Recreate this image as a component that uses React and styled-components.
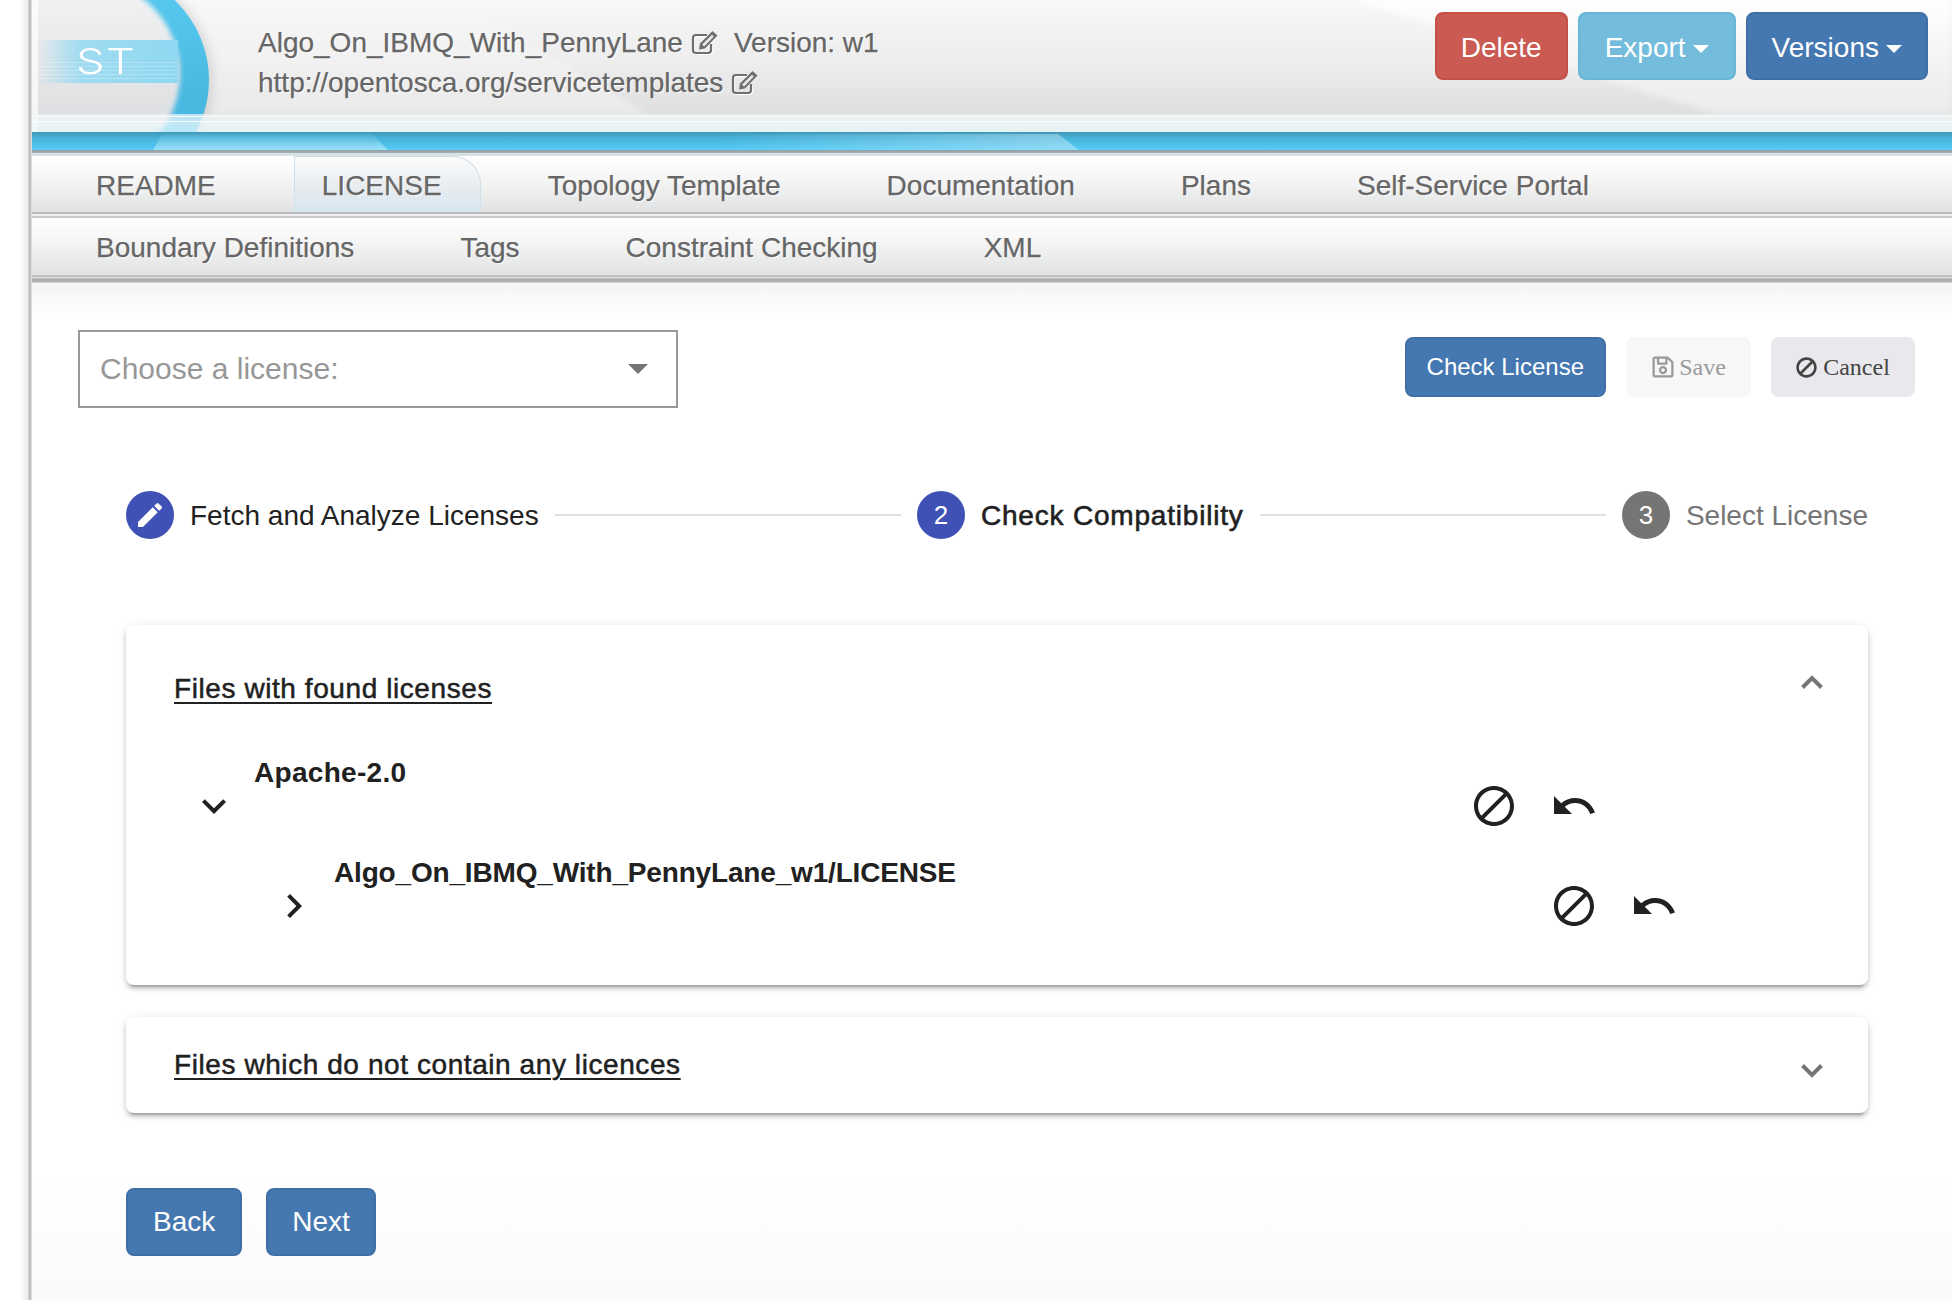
import styled, { createGlobalStyle } from 'styled-components'
import { FaRegSave, FaBan } from 'react-icons/fa'

const GlobalStyle = createGlobalStyle`
  html, body {
    margin: 0;
    padding: 0;
    height: 100%;
    background: #fff;
    font-family: "Liberation Sans", Arial, sans-serif;
    font-size: 28px;
    color: #212121;
    overflow: hidden;
  }
`

const Page = styled.div`
  box-sizing: border-box;
  width: 1952px;
  height: 1300px;
  padding-left: 32px;
  overflow: hidden;
  background: linear-gradient(90deg, #fff 20px, #ececec 27px, #ececec 28px, #bdbdbd 29px, #bdbdbd 31px, transparent 32px);
`

const Main = styled.div`
  height: 1300px;
  background: linear-gradient(180deg, #fff 1180px, #fafafa 1300px);
`

const Header = styled.header`
  position: relative;
  height: 150px;
  display: flex;
  justify-content: space-between;
  overflow: hidden;
  background: #e9e9ea;
`

const HeaderArt = styled.svg`
  position: absolute;
  left: 0;
  top: 0;
`

const LogoText = styled.span`
  position: absolute;
  left: 44px;
  top: 39px;
  font-family: Inter, "Liberation Sans", sans-serif;
  font-weight: 300;
  font-size: 36px;
  line-height: 44px;
  letter-spacing: 1px;
  color: #fff;
  transform: scaleX(1.26);
  transform-origin: left center;
`

const HeaderInfo = styled.div`
  position: relative;
  margin-left: 226px;
  padding-top: 23px;
  color: #666;
  text-shadow: 1px 1px 0 #fff;
  -webkit-text-stroke: 0.25px #666;
  line-height: 40px;
`

const InfoLine = styled.div`
  display: flex;
  align-items: center;
  white-space: nowrap;
`

const EditGlyph = styled.svg`
  width: 30px;
  height: 26px;
  margin-left: 7px;
  margin-top: -2px;
`

const VersionLabel = styled.span`
  margin-left: 14px;
`

const HeaderActions = styled.div`
  position: relative;
  display: flex;
  gap: 10px;
  padding: 12px 24px 0 0;
`

const Button = styled.button`
  box-sizing: border-box;
  height: ${p => p.$height || 68}px;
  padding: ${p => p.$nudge || 0}px ${p => p.$pad || 24}px 0;
  display: inline-flex;
  align-items: center;
  justify-content: center;
  border: 2px solid ${p => p.$border};
  border-radius: 8px;
  background: ${p => p.$bg};
  color: #fff;
  font-family: "Liberation Sans", Arial, sans-serif;
  font-size: ${p => p.$size || 28}px;
`

const Caret = styled.span`
  width: 0;
  height: 0;
  margin-left: 7px;
  margin-top: 2px;
  border-left: 8px solid transparent;
  border-right: 8px solid transparent;
  border-top: 8px solid #fff;
`

const TabsTop = styled.div`
  height: 6px;
  background: linear-gradient(180deg, #8f9ea3 0, #a8b1b4 3px, #d8e1e4 3px, #d8e1e4 6px);
`

const TabRow = styled.nav`
  display: flex;
  height: ${p => p.$height}px;
  padding-left: 11px;
  color: #666;
  background: linear-gradient(180deg, #fff 0, #f7f7f7 20px, #e1e2e3 100%);
`

const RowDivider = styled.div`
  height: 6px;
  background: linear-gradient(180deg, #bcbcbc 0, #bcbcbc 2px, #f0f0f0 2px, #f0f0f0 4px, #c9c9c9 4px, #c9c9c9 6px);
`

const BottomDivider = styled.div`
  height: 45px;
  background: linear-gradient(180deg, #c2c2c2 0, #c2c2c2 2px, #dcdcdc 2px, #dcdcdc 3px, #a9a9a9 4px, #b4b4b4 7px, #f4f4f4 8px, #f8f8f8 20px, #fff 100%);
`

const Tab = styled.a`
  position: relative;
  padding: 2px 53px 0;
  line-height: 56px;
  white-space: nowrap;
  text-shadow: 1px 1px 0 #fff;
  -webkit-text-stroke: 0.25px #666;

  ${p => p.$active && `
    &::before {
      content: '';
      position: absolute;
      top: 0;
      bottom: 0;
      left: 25px;
      right: 14px;
      border: 1px solid #cfe0ea;
      border-bottom: none;
      border-top-right-radius: 28px;
      background: linear-gradient(180deg, #fbfbfb 0, #e9edf0 50%, #d6e6f0 100%);
    }
  `}
`

const TabLabel = styled.span`
  position: relative;
`

const Content = styled.main`
  padding: 0 37px 0 46px;
`

const Toolbar = styled.div`
  display: flex;
  justify-content: space-between;
  align-items: flex-start;
  margin-top: 10px;
`

const LicenseSelect = styled.div`
  box-sizing: border-box;
  width: 600px;
  height: 78px;
  padding: 0 28px 0 20px;
  display: flex;
  align-items: center;
  justify-content: space-between;
  border: 2px solid #999;
  color: #979797;
  font-size: 30px;
`

const SelectArrow = styled.span`
  width: 0;
  height: 0;
  border-left: 10px solid transparent;
  border-right: 10px solid transparent;
  border-top: 10px solid #757575;
`

const ToolbarActions = styled.div`
  display: flex;
  gap: 20px;
  margin-top: 7px;
`

const LightButton = styled.button`
  box-sizing: border-box;
  height: 60px;
  width: ${p => p.$width}px;
  display: inline-flex;
  align-items: center;
  justify-content: center;
  gap: ${p => p.$gap}px;
  border: none;
  border-radius: 8px;
  background: ${p => p.$bg};
  color: ${p => p.$color};
  font-family: "Liberation Serif", "Times New Roman", serif;
  font-size: 24px;
`

const BanIcon = styled(FaBan)`
  width: 21px;
  height: 21px;
  transform: scaleX(-1);
`

const Section = styled.div`
  width: 1742px;
  margin-left: 48px;
`

const Stepper = styled.div`
  display: flex;
  align-items: center;
  margin-top: 83px;
`

const StepCircle = styled.span`
  flex: none;
  width: 48px;
  height: 48px;
  display: flex;
  align-items: center;
  justify-content: center;
  border-radius: 50%;
  background: ${p => p.$bg};
  color: #fff;
  font-size: 26px;
`

const StepLabel = styled.span`
  margin-left: 16px;
  padding-top: 2px;
  white-space: nowrap;
  color: ${p => p.$color || '#212121'};
  ${p => p.$strong && `
    letter-spacing: 0.8px;
    -webkit-text-stroke: 0.6px #212121;
  `}
`

const StepLine = styled.span`
  flex: 1;
  height: 2px;
  margin: 0 16px;
  background: #e0e0e0;
`

const Card = styled.section`
  position: relative;
  margin-top: ${p => p.$top}px;
  border-radius: 8px;
  background: #fff;
  box-shadow: 0 6px 2px -4px rgba(0, 0, 0, 0.2), 0 4px 4px rgba(0, 0, 0, 0.14), 0 2px 10px rgba(0, 0, 0, 0.12);
`

const CardHeader = styled.div`
  height: ${p => (p.$open ? 128 : 96)}px;
  padding: 0 45px 0 48px;
  display: flex;
  align-items: center;
  justify-content: space-between;
`

const CardTitle = styled.span`
  letter-spacing: 0.58px;
  text-decoration: underline;
  text-decoration-thickness: 2px;
  text-underline-offset: 4px;
  -webkit-text-stroke: 0.5px #212121;
`

const Indicator = styled.svg`
  width: 22px;
  height: 14px;
  margin-top: ${p => p.$offset}px;
  fill: none;
  stroke: #757575;
  stroke-width: 4;
`

const Tree = styled.div`
  padding: 0 0 55px 64px;
`

const TreeRow = styled.div`
  height: 77px;
  margin-top: ${p => (p.$nested ? 23 : 0)}px;
  padding-left: ${p => (p.$nested ? 80 : 0)}px;
  display: flex;
  align-items: flex-end;
`

const IconSlot = styled.svg`
  flex: none;
  width: 48px;
  height: 48px;
  fill: #212121;
`

const TreeTitle = styled.span`
  flex: none;
  align-self: flex-start;
  width: 1216px;
  margin-left: 16px;
  font-weight: 700;
  line-height: 40px;
  letter-spacing: ${p => p.$tracking}px;
`

const ActionIcons = styled.div`
  display: flex;
  gap: 32px;
`

const Footer = styled.div`
  display: flex;
  gap: 24px;
  margin-top: 75px;
`

const blockPath = 'M12 2C6.48 2 2 6.48 2 12s4.48 10 10 10 10-4.48 10-10S17.52 2 12 2zM4 12c0-4.42 3.58-8 8-8 1.85 0 3.55.63 4.9 1.69L5.69 16.9C4.63 15.55 4 13.85 4 12zm8 8c-1.85 0-3.55-.63-4.9-1.69L18.31 7.1C19.37 8.45 20 10.15 20 12c0 4.42-3.58 8-8 8z'
const undoPath = 'M12.5 8c-2.65 0-5.05.99-6.9 2.6L2 7v9h9l-3.62-3.62c1.39-1.16 3.16-1.88 5.12-1.88 3.54 0 6.55 2.31 7.6 5.5l2.37-.78C21.08 11.03 17.15 8 12.5 8z'

function MatIcon({ d }) {
  return (
    <IconSlot viewBox="0 0 24 24">
      <path d={d} />
    </IconSlot>
  )
}

function EditIcon() {
  return (
    <EditGlyph viewBox="0 0 30 26">
      <path d="M17 6H6a3 3 0 0 0-3 3v12a3 3 0 0 0 3 3h12a3 3 0 0 0 3-3v-6" fill="none" stroke="#fff" strokeWidth="2.4" transform="translate(1 1)" />
      <path d="M17 6H6a3 3 0 0 0-3 3v12a3 3 0 0 0 3 3h12a3 3 0 0 0 3-3v-6" fill="none" stroke="#6f6f6f" strokeWidth="2.2" />
      <path d="M10 14.5 L22.5 2 L27.5 6.5 L15 19.5 L9 20.5z" fill="#6f6f6f" />
      <path d="M12.2 15.6 L22 5.8 L23.8 7.4 L14 17.4z" fill="#e9e9e9" />
    </EditGlyph>
  )
}

function HeaderBackdrop() {
  return (
    <HeaderArt width="1920" height="150" viewBox="0 0 1920 150">
      <defs>
        <linearGradient id="base" x1="0" y1="0" x2="0" y2="1">
          <stop offset="0" stopColor="#f8f8f8" />
          <stop offset="0.5" stopColor="#ececed" />
          <stop offset="0.86" stopColor="#dfdfe0" />
        </linearGradient>
        <linearGradient id="wedge" x1="0" y1="0" x2="0" y2="1">
          <stop offset="0" stopColor="#ffffff" stopOpacity="0.1" />
          <stop offset="1" stopColor="#ffffff" stopOpacity="0.35" />
        </linearGradient>
        <linearGradient id="topRight" x1="0" y1="0" x2="0" y2="1">
          <stop offset="0" stopColor="#ffffff" />
          <stop offset="0.35" stopColor="#f7f7f7" />
          <stop offset="1" stopColor="#ebebec" />
        </linearGradient>
        <linearGradient id="ring" x1="0" y1="0" x2="0" y2="1">
          <stop offset="0" stopColor="#5accf2" />
          <stop offset="0.6" stopColor="#48b8e0" />
          <stop offset="1" stopColor="#58c4ea" />
        </linearGradient>
        <linearGradient id="disc" x1="0" y1="0" x2="0" y2="1">
          <stop offset="0" stopColor="#f4f5f6" />
          <stop offset="0.45" stopColor="#e5e6e8" />
          <stop offset="1" stopColor="#d9dadc" />
        </linearGradient>
        <linearGradient id="stripe" x1="0" y1="0" x2="1" y2="0">
          <stop offset="0" stopColor="#8fd8f2" stopOpacity="0" />
          <stop offset="0.3" stopColor="#8fd8f2" stopOpacity="0.8" />
          <stop offset="1" stopColor="#8fd8f2" />
        </linearGradient>
        <linearGradient id="glass" x1="0" y1="0" x2="0" y2="1">
          <stop offset="0" stopColor="#f1f4f6" />
          <stop offset="0.45" stopColor="#f4fbfd" />
          <stop offset="1" stopColor="#e9fbff" />
        </linearGradient>
        <linearGradient id="band" x1="0" y1="0" x2="0" y2="1">
          <stop offset="0" stopColor="#3f97b4" />
          <stop offset="0.3" stopColor="#44b0d8" />
          <stop offset="1" stopColor="#56cdf8" />
        </linearGradient>
        <linearGradient id="sheen" x1="0" y1="0" x2="0" y2="1">
          <stop offset="0" stopColor="#ffffff" stopOpacity="0" />
          <stop offset="1" stopColor="#ffffff" stopOpacity="0.4" />
        </linearGradient>
        <linearGradient id="fadeLeft" x1="0" y1="0" x2="1" y2="0">
          <stop offset="0" stopColor="#ffffff" stopOpacity="0" />
          <stop offset="1" stopColor="#ffffff" stopOpacity="0.35" />
        </linearGradient>
        <filter id="soft" x="-5%" y="-20%" width="110%" height="140%">
          <feGaussianBlur stdDeviation="2.5" />
        </filter>
        <filter id="softer" x="-20%" y="-20%" width="140%" height="140%">
          <feGaussianBlur stdDeviation="6" />
        </filter>
        <clipPath id="plate">
          <rect x="0" y="0" width="1920" height="132" />
        </clipPath>
      </defs>

      <rect width="1920" height="132" fill="url(#base)" />
      <polygon points="0,0 422,0 616,114 0,114" fill="url(#wedge)" filter="url(#soft)" />
      <polygon points="1322,0 1920,0 1920,114 1684,114" fill="url(#topRight)" filter="url(#soft)" />

      <g clipPath="url(#plate)">
        <circle cx="70" cy="80" r="110" fill="#9a9a9a" opacity="0.35" filter="url(#softer)" />
        <circle cx="67" cy="80" r="110" fill="url(#ring)" />
        <circle cx="53" cy="74" r="95" fill="url(#disc)" filter="url(#soft)" />
        <rect x="6" y="40" width="140" height="43" fill="url(#stripe)" />
        <rect x="6" y="62" width="140" height="1" fill="#ffffff" opacity="0.25" />
        <rect x="6" y="66" width="140" height="1" fill="#ffffff" opacity="0.25" />
        <rect x="6" y="70" width="140" height="1" fill="#ffffff" opacity="0.25" />
        <rect x="6" y="74" width="140" height="1" fill="#ffffff" opacity="0.25" />
        <rect x="6" y="78" width="140" height="1" fill="#ffffff" opacity="0.25" />
        <rect x="0" y="0" width="6" height="132" fill="#ffffff" opacity="0.7" />
      </g>

      <rect y="114" width="1920" height="18" fill="url(#glass)" opacity="0.7" />
      <rect y="116" width="1920" height="1" fill="#ffffff" opacity="0.8" />
      <rect y="121" width="1920" height="1" fill="#ffffff" opacity="0.8" />

      <rect y="132" width="1920" height="18" fill="url(#band)" />
      <polygon points="131,132 338,132 356,150 121,150" fill="url(#sheen)" />
      <polygon points="690,134 1026,134 1047,150 690,150" fill="url(#fadeLeft)" />
    </HeaderArt>
  )
}

export default function App() {
  return (
    <>
      <GlobalStyle />
      <Page>
        <Main>
          <Header>
            <HeaderBackdrop />
            <LogoText>ST</LogoText>
            <HeaderInfo>
              <InfoLine>
                Algo_On_IBMQ_With_PennyLane
                <EditIcon />
                <VersionLabel>Version: w1</VersionLabel>
              </InfoLine>
              <InfoLine>
                http://opentosca.org/servicetemplates
                <EditIcon />
              </InfoLine>
            </HeaderInfo>
            <HeaderActions>
              <Button $nudge={3} $bg="#cb5a52" $border="#c34f47">Delete</Button>
              <Button $nudge={3} $pad={25} $bg="#73bcdb" $border="#68b5d6">Export<Caret /></Button>
              <Button $nudge={3} $bg="#4578b0" $border="#3f6fa5">Versions<Caret /></Button>
            </HeaderActions>
          </Header>

          <TabsTop />
          <TabRow $height={56}>
            <Tab><TabLabel>README</TabLabel></Tab>
            <Tab $active><TabLabel>LICENSE</TabLabel></Tab>
            <Tab><TabLabel>Topology Template</TabLabel></Tab>
            <Tab><TabLabel>Documentation</TabLabel></Tab>
            <Tab><TabLabel>Plans</TabLabel></Tab>
            <Tab><TabLabel>Self-Service Portal</TabLabel></Tab>
          </TabRow>
          <RowDivider />
          <TabRow $height={57}>
            <Tab><TabLabel>Boundary Definitions</TabLabel></Tab>
            <Tab><TabLabel>Tags</TabLabel></Tab>
            <Tab><TabLabel>Constraint Checking</TabLabel></Tab>
            <Tab><TabLabel>XML</TabLabel></Tab>
          </TabRow>
          <BottomDivider />

          <Content>
            <Toolbar>
              <LicenseSelect>
                Choose a license:
                <SelectArrow />
              </LicenseSelect>
              <ToolbarActions>
                <Button $height={60} $size={24} $pad={20} $bg="#4578b0" $border="#3f6fa5">Check License</Button>
                <LightButton $width={125} $gap={4} $bg="#f7f7f8" $color="#999"><FaRegSave />Save</LightButton>
                <LightButton $width={144} $gap={6} $bg="#e9e9ed" $color="#444"><BanIcon />Cancel</LightButton>
              </ToolbarActions>
            </Toolbar>

            <Section>
              <Stepper>
                <StepCircle $bg="#3f51b5">
                  <svg width="32" height="32" viewBox="0 0 24 24" fill="#fff">
                    <path d="M3 17.25V21h3.75L17.81 9.94l-3.75-3.75L3 17.25zM20.71 7.04a1 1 0 0 0 0-1.41l-2.34-2.34a1 1 0 0 0-1.41 0l-1.83 1.83 3.75 3.75 1.83-1.83z" />
                  </svg>
                </StepCircle>
                <StepLabel>Fetch and Analyze Licenses</StepLabel>
                <StepLine />
                <StepCircle $bg="#3f51b5">2</StepCircle>
                <StepLabel $strong>Check Compatibility</StepLabel>
                <StepLine />
                <StepCircle $bg="#757575">3</StepCircle>
                <StepLabel $color="#757575">Select License</StepLabel>
              </Stepper>

              <Card $top={86}>
                <CardHeader $open>
                  <CardTitle>Files with found licenses</CardTitle>
                  <Indicator viewBox="0 0 22 14" $offset={-14}>
                    <polyline points="1.5,12.5 11,3 20.5,12.5" />
                  </Indicator>
                </CardHeader>
                <Tree>
                  <TreeRow>
                    <MatIcon d="M16.59 8.59L12 13.17 7.41 8.59 6 10l6 6 6-6z" />
                    <TreeTitle $tracking={0.3}>Apache-2.0</TreeTitle>
                    <ActionIcons>
                      <MatIcon d={blockPath} />
                      <MatIcon d={undoPath} />
                    </ActionIcons>
                  </TreeRow>
                  <TreeRow $nested>
                    <MatIcon d="M10 6L8.59 7.41 13.17 12l-4.58 4.59L10 18l6-6z" />
                    <TreeTitle $tracking={-0.17}>Algo_On_IBMQ_With_PennyLane_w1/LICENSE</TreeTitle>
                    <ActionIcons>
                      <MatIcon d={blockPath} />
                      <MatIcon d={undoPath} />
                    </ActionIcons>
                  </TreeRow>
                </Tree>
              </Card>

              <Card $top={32}>
                <CardHeader>
                  <CardTitle>Files which do not contain any licences</CardTitle>
                  <Indicator viewBox="0 0 22 14" $offset={12}>
                    <polyline points="1.5,1.5 11,11 20.5,1.5" />
                  </Indicator>
                </CardHeader>
              </Card>

              <Footer>
                <Button $pad={25} $bg="#4578b0" $border="#3f6fa5">Back</Button>
                <Button $bg="#4578b0" $border="#3f6fa5">Next</Button>
              </Footer>
            </Section>
          </Content>
        </Main>
      </Page>
    </>
  )
}
